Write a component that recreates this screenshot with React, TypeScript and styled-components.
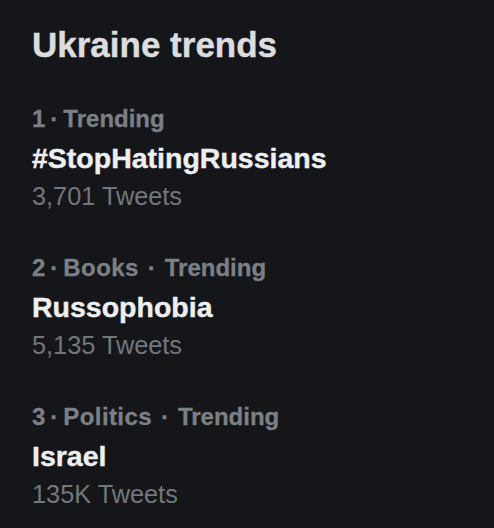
import React from 'react';
import styled, { createGlobalStyle } from 'styled-components';

interface Trend {
  rank: number;
  category?: string;
  name: string;
  count: string;
}

const trends: Trend[] = [
  { rank: 1, name: '#StopHatingRussians', count: '3,701 Tweets' },
  { rank: 2, category: 'Books', name: 'Russophobia', count: '5,135 Tweets' },
  { rank: 3, category: 'Politics', name: 'Israel', count: '135K Tweets' },
];

const GlobalStyle = createGlobalStyle`
  html, body {
    margin: 0;
    padding: 0;
    background-color: #15161a;
  }

  body {
    font-family: 'Liberation Sans', Arial, sans-serif;
    -webkit-font-smoothing: antialiased;
  }
`;

export default function App(): JSX.Element {
  return (
    <>
      <GlobalStyle />
      <Panel>
        <Title>Ukraine trends</Title>
        <List>
          {trends.map((trend) => (
            <Item key={trend.rank}>
              <Meta>
                <span>{trend.rank}</span>
                <Sep>·</Sep>
                {trend.category && (
                  <>
                    <Category>{trend.category}</Category>
                    <Sep $wide>·</Sep>
                  </>
                )}
                <span>Trending</span>
              </Meta>
              <Name>{trend.name}</Name>
              <Count>{trend.count}</Count>
            </Item>
          ))}
        </List>
      </Panel>
    </>
  );
}

const Panel = styled.main`
  display: flex;
  flex-direction: column;
  padding: 24px 32px;
  min-height: 528px;
  box-sizing: border-box;
  background-color: #15161a;
`;

const Title = styled.h1`
  margin: 0 0 38px;
  font-size: 35px;
  line-height: 42px;
  font-weight: 700;
  color: #dcddde;
  -webkit-text-stroke: 0.4px #dcddde;
`;

const List = styled.div`
  display: flex;
  flex-direction: column;
  gap: 41px;
`;

const Item = styled.div`
  display: flex;
  flex-direction: column;
`;

const Meta = styled.div`
  display: flex;
  align-items: baseline;
  font-size: 24px;
  line-height: 30px;
  font-weight: 700;
  color: #7b8086;
  -webkit-text-stroke: 0.3px #7b8086;
  white-space: nowrap;
`;

const Category = styled.span`
  letter-spacing: 0.4px;
`;

const Sep = styled.span<{ $wide?: boolean }>`
  margin: 0 ${({ $wide }) => ($wide ? '9px' : '5px')};
`;

const Name = styled.div`
  padding-top: 3px;
  font-size: 28.5px;
  line-height: 42px;
  font-weight: 700;
  color: #eeeff0;
  -webkit-text-stroke: 0.4px #eeeff0;
`;

const Count = styled.div`
  margin-top: 1px;
  font-size: 25.3px;
  line-height: 32px;
  font-weight: 400;
  color: #72777c;
`;
